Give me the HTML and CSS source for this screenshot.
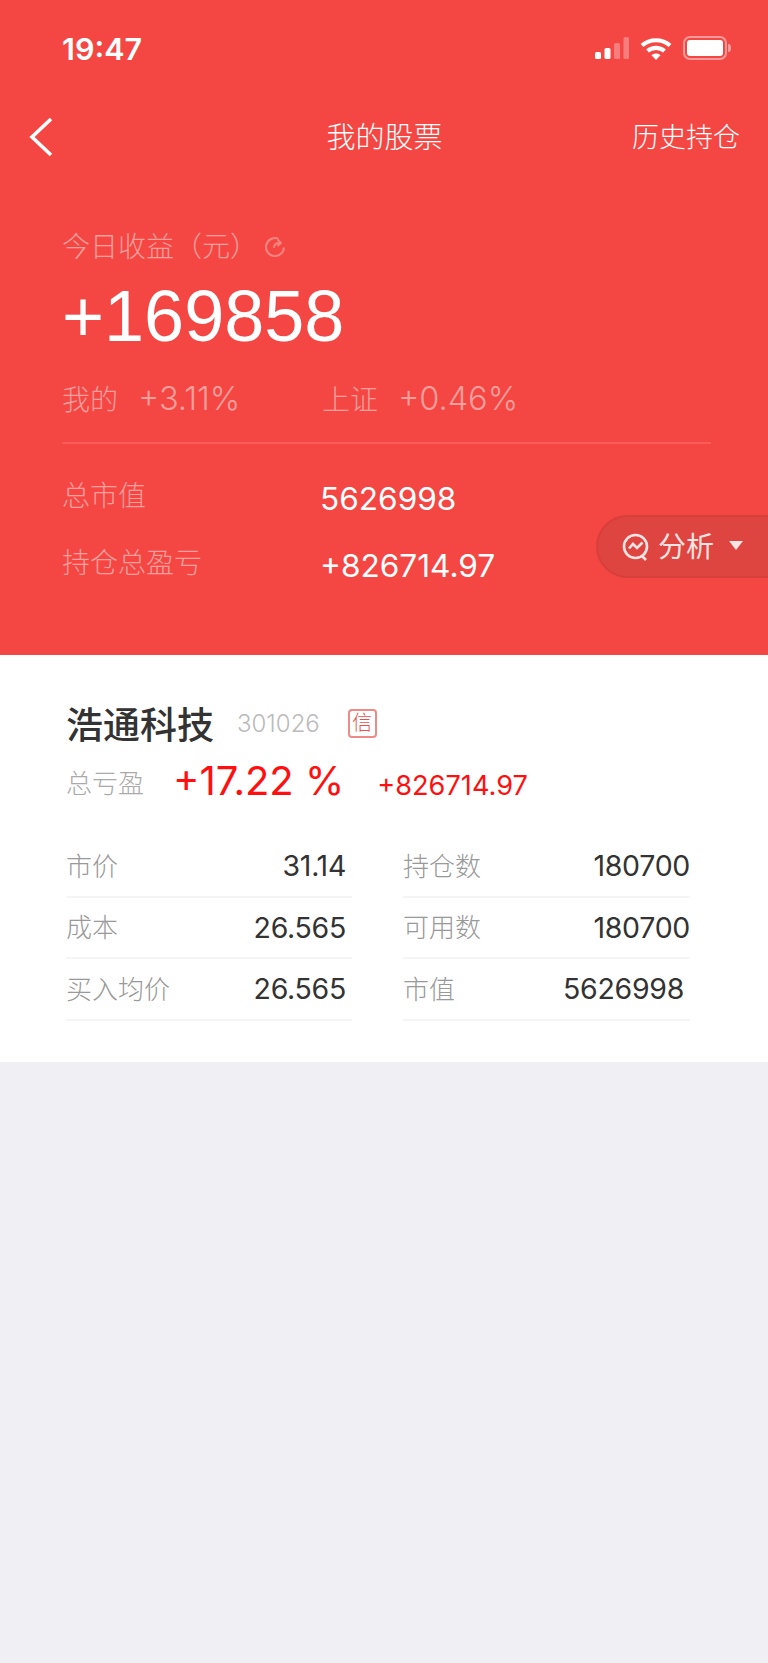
FILE: index.html
```html
<!DOCTYPE html>
<html lang="zh-CN">
<head>
    <meta charset="UTF-8">
    <meta name="viewport" content="width=device-width, initial-scale=1.0">
    <title>我的股票</title>
    <link rel="stylesheet" href="styles.css">
</head>
<body>
    <div class="header">
        <div class="status-bar">
            <span class="time">19:47</span>
            <div class="status-icons">
                <svg class="signal" width="34" height="22" viewBox="0 0 34 22">
                    <rect x="0" y="15" width="6" height="7" rx="1.5" fill="#fff"/>
                    <rect x="9.500" y="11" width="6" height="11" rx="1.5" fill="#fff"/>
                    <rect x="19" y="6" width="6" height="16" rx="1.5" fill="#fff" opacity="0.3"/>
                    <rect x="28.500" y="0" width="5.500" height="22" rx="1.500" fill="#fff" opacity="0.3"/>
                </svg>
                <svg class="wifi" width="32" height="23" viewBox="0 0 32 23">
                    <path d="M2 8.500C9.800 1.500 22.200 1.500 30 8.500" fill="none" stroke="#fff" stroke-width="4.200"/>
                    <path d="M7.500 14C12.500 9.800 19.500 9.800 24.500 14" fill="none" stroke="#fff" stroke-width="4.200"/>
                    <path d="M11.500 18.200C14 16 18 16 20.500 18.200L16 23Z" fill="#fff"/>
                </svg>
                <div class="battery"><div class="battery-level"></div></div>
                <div class="battery-tip"></div>
            </div>
        </div>
        <div class="nav">
            <svg class="back" width="24" height="40" viewBox="0 0 24 40">
                <path d="M22 2L3 20L22 38" fill="none" stroke="#fff" stroke-width="3.600"/>
            </svg>
            <span class="nav-title">我的股票</span>
            <span class="nav-link">历史持仓</span>
        </div>
        <div class="summary">
            <div class="today">
                <span>今日收益（元）</span>
                <svg class="refresh" width="24" height="24" viewBox="0 0 24 24">
                    <path d="M15.500 3.800A9 9 0 1 0 21 12.500" fill="none" stroke="#fb8481" stroke-width="2"/>
                    <path d="M11 13C11 10 13 8 16.500 8M14.500 4.500L18 8L14.500 11" fill="none" stroke="#fb8481" stroke-width="1.800"/>
                </svg>
            </div>
            <div class="today-value">+169858</div>
            <div class="compare">
                <div class="compare-item"><span>我的</span><span class="compare-num">+3.11%</span></div>
                <div class="compare-item"><span>上证</span><span class="compare-num">+0.46%</span></div>
            </div>
            <div class="summary-row first">
                <span class="summary-label">总市值</span>
                <span class="summary-value">5626998</span>
            </div>
            <div class="summary-row">
                <span class="summary-label">持仓总盈亏</span>
                <span class="summary-value">+826714.97</span>
            </div>
        </div>
        <div class="analysis">
            <svg width="28" height="28" viewBox="0 0 28 28">
                <circle cx="13.500" cy="13.500" r="11.500" fill="none" stroke="#fde3e2" stroke-width="2.600"/>
                <path d="M20 23L24 27" stroke="#fde3e2" stroke-width="2.600"/>
                <path d="M7 15.500L11 11L15 15L20.500 9.500" fill="none" stroke="#fde3e2" stroke-width="2.600"/>
            </svg>
            <span>分析</span>
            <i class="caret"></i>
        </div>
    </div>

    <div class="stock">
        <div class="stock-head">
            <span class="stock-name">浩通科技</span>
            <span class="stock-code">301026</span>
            <span class="stock-tag">信</span>
        </div>
        <div class="stock-profit">
            <span class="profit-label">总亏盈</span>
            <span class="profit-rate">+17.22 %</span>
            <span class="profit-amount">+826714.97</span>
        </div>
        <div class="stock-table">
            <div class="cell pad"><span class="cell-label">市价</span><span class="cell-value">31.14</span></div>
            <div class="cell"><span class="cell-label">持仓数</span><span class="cell-value">180700</span></div>
            <div class="cell pad"><span class="cell-label">成本</span><span class="cell-value">26.565</span></div>
            <div class="cell"><span class="cell-label">可用数</span><span class="cell-value">180700</span></div>
            <div class="cell pad"><span class="cell-label">买入均价</span><span class="cell-value">26.565</span></div>
            <div class="cell pad"><span class="cell-label">市值</span><span class="cell-value">5626998</span></div>
        </div>
    </div>
</body>
</html>
```

FILE: styles.css
```css
body {
    margin: 0;
    min-height: 1663px;
    background-color: #efeff4;
    font-family: Inter, "Noto Sans CJK SC", sans-serif;
    font-weight: 300;
    color: #333;
}

.header {
    position: relative;
    height: 655px;
    background-color: #f44744;
    color: white;
    overflow: hidden;
}

.status-bar {
    height: 96px;
    display: flex;
    align-items: center;
    justify-content: space-between;
    padding: 0 37px 0 62px;
}

.time {
    font-size: 30.500px;
    font-weight: 600;
}

.status-icons {
    display: flex;
    align-items: center;
}

.signal {
    margin-right: 11px;
}

.wifi {
    margin-right: 11px;
}

.battery {
    width: 44px;
    height: 24px;
    box-sizing: border-box;
    border: 2px solid rgba(255, 255, 255, 0.45);
    border-radius: 7px;
    padding: 2px;
}

.battery-level {
    height: 100%;
    background-color: white;
    border-radius: 3px;
}

.battery-tip {
    width: 3px;
    height: 8px;
    margin-left: 1px;
    background-color: rgba(255, 255, 255, 0.45);
    border-radius: 0 4px 4px 0;
}

.nav {
    height: 82px;
    display: grid;
    grid-template-columns: 1fr auto 1fr;
    align-items: center;
    padding: 0 28px 0 29px;
}

.nav-title {
    font-size: 29px;
    margin-bottom: 4px;
}

.nav-link {
    font-size: 27px;
    justify-self: end;
    margin-bottom: 4px;
}

.summary {
    padding: 47px 57px 0 62px;
}

.today {
    display: flex;
    align-items: center;
    height: 40px;
    font-size: 28px;
    color: #fc9f9c;
}

.refresh {
    margin-left: 5px;
    margin-top: 4px;
}

.today-value {
    margin-top: 11px;
    height: 80px;
    line-height: 80px;
    font-family: "Liberation Sans", sans-serif;
    font-weight: 400;
    font-size: 72px;
}

.compare {
    display: flex;
    margin-top: 22px;
    padding-bottom: 24px;
    border-bottom: 2px solid #fa5d59;
    height: 40px;
    font-size: 28px;
    color: #fc9f9c;
}

.compare-item {
    display: flex;
    align-items: center;
    width: 260px;
}

.compare-num {
    margin-left: 20px;
    font-size: 32.500px;
}

.summary-row {
    display: flex;
    align-items: center;
    height: 40px;
    margin-top: 27px;
}

.summary-row.first {
    margin-top: 32px;
}

.summary-label {
    width: 258px;
    font-size: 28px;
    color: #fc9f9c;
    margin-bottom: 4px;
}

.summary-value {
    font-size: 31.600px;
    font-weight: 400;
    margin-top: 4px;
}

.analysis {
    position: absolute;
    left: 596px;
    top: 515px;
    width: 200px;
    height: 63px;
    box-sizing: border-box;
    padding-left: 24px;
    display: flex;
    align-items: center;
    background-color: #df4540;
    border: 2px solid #d83f3b;
    border-radius: 32px;
    font-size: 28px;
    font-weight: 400;
    color: #fde3e2;
}

.analysis span {
    margin: 0 0 4px 8px;
}

.caret {
    margin: 0 0 2px 15px;
    width: 0;
    height: 0;
    border-left: 7px solid transparent;
    border-right: 7px solid transparent;
    border-top: 9px solid #fde3e2;
}

.stock {
    background-color: white;
    height: 407px;
    box-sizing: border-box;
    padding: 46px 78px 0 66px;
}

.stock-head {
    display: flex;
    align-items: center;
    height: 44px;
}

.stock-name {
    font-size: 37px;
    font-weight: 500;
}

.stock-code {
    margin-left: 23px;
    font-size: 24px;
    color: #bbb;
}

.stock-tag {
    margin-left: 28px;
    width: 29px;
    height: 29px;
    box-sizing: border-box;
    border: 2px solid #ee8a88;
    border-radius: 4px;
    font-size: 20px;
    line-height: 25px;
    text-align: center;
    color: #e8504d;
}

.stock-profit {
    display: flex;
    align-items: center;
    margin-top: 12px;
    height: 50px;
}

.profit-label {
    font-size: 26px;
    color: #aaa;
    margin-bottom: 2px;
}

.profit-rate {
    margin: 0 0 4px 29px;
    font-size: 40px;
    font-weight: 400;
    color: #ff0f0f;
}

.profit-amount {
    margin: 6px 0 0 33px;
    font-size: 27.200px;
    font-weight: 400;
    color: #ff0f0f;
}

.stock-table {
    display: grid;
    grid-template-columns: 286px 287px;
    column-gap: 51px;
    margin-top: 29px;
}

.cell {
    display: flex;
    align-items: center;
    justify-content: space-between;
    height: 59.500px;
    border-bottom: 2px solid #f5f5f5;
}

.cell.pad {
    padding-right: 6px;
}

.cell-label {
    font-size: 26px;
    color: #999;
    margin-bottom: 3px;
}

.cell-value {
    font-size: 28.500px;
    font-weight: 400;
    letter-spacing: -0.3px;
    color: #333;
}
```
